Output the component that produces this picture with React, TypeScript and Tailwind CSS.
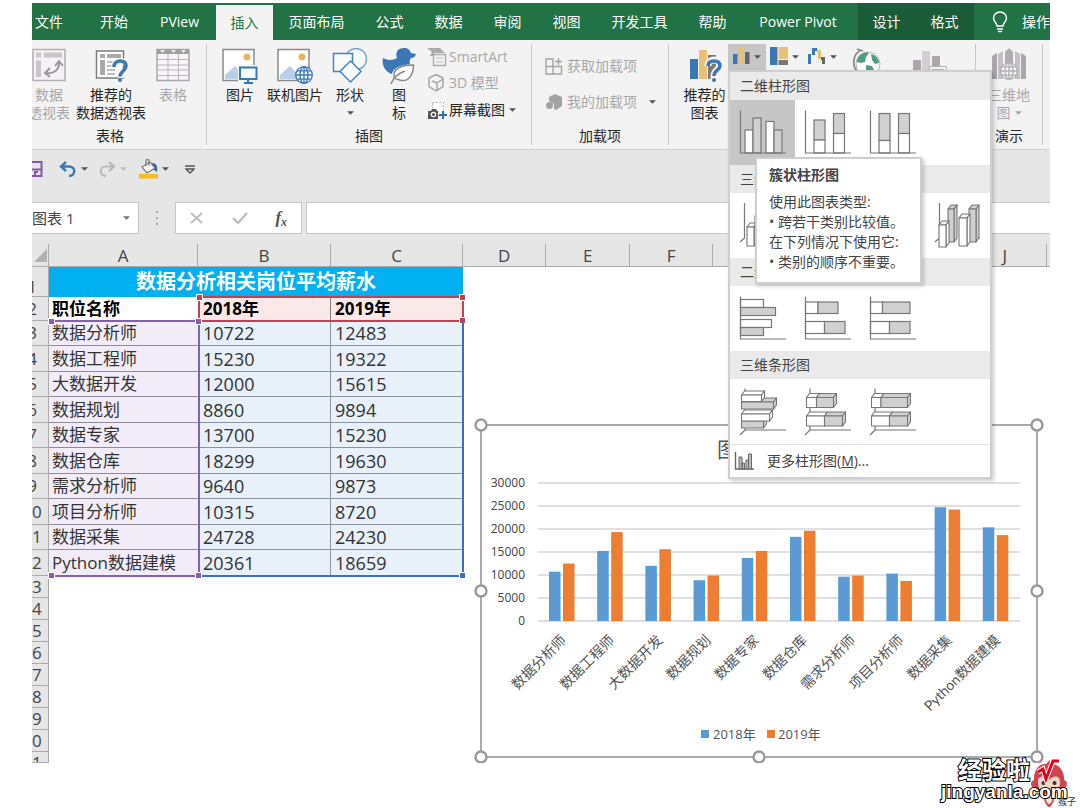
import React from 'react';

interface SalaryRow {
  name: string;
  y2018: number;
  y2019: number;
}

const salaries: SalaryRow[] = [
  { name: '数据分析师', y2018: 10722, y2019: 12483 },
  { name: '数据工程师', y2018: 15230, y2019: 19322 },
  { name: '大数据开发', y2018: 12000, y2019: 15615 },
  { name: '数据规划', y2018: 8860, y2019: 9894 },
  { name: '数据专家', y2018: 13700, y2019: 15230 },
  { name: '数据仓库', y2018: 18299, y2019: 19630 },
  { name: '需求分析师', y2018: 9640, y2019: 9873 },
  { name: '项目分析师', y2018: 10315, y2019: 8720 },
  { name: '数据采集', y2018: 24728, y2019: 24230 },
  { name: 'Python数据建模', y2018: 20361, y2019: 18659 },
];

const tabs = [
  { label: '文件', className: 'w-[53px] pr-[19px]' },
  { label: '开始', className: 'w-[58px]' },
  { label: 'PView', className: 'w-[73px]' },
  { label: '插入', className: 'w-[57px] self-end h-[35px] bg-[#f3f3f3] text-[#217346]' },
  { label: '页面布局', className: 'w-[87px]' },
  { label: '公式', className: 'w-[59px]' },
  { label: '数据', className: 'w-[59px]' },
  { label: '审阅', className: 'w-[59px]' },
  { label: '视图', className: 'w-[59px]' },
  { label: '开发工具', className: 'w-[87px]' },
  { label: '帮助', className: 'w-[59px]' },
  { label: 'Power Pivot', className: 'w-[116px] pr-1' },
  { label: '设计', className: 'w-[57px] bg-[#1b5c38]' },
  { label: '格式', className: 'w-[59px] bg-[#1b5c38]' },
];

/* ---------- icons ---------- */

const Caret = ({ className = 'text-[#555]' }: { className?: string }) => (
  <svg viewBox="0 0 8 4" className={`w-[7px] h-1 shrink-0 ${className}`} fill="currentColor">
    <path d="M0 0h8L4 4z" />
  </svg>
);

const PivotIcon = () => (
  <svg viewBox="0 0 34 34" className="size-[34px]">
    <rect x="1" y="1.500" width="32" height="31" fill="#f6f1f6" stroke="#b3aeb3" strokeWidth="1.500" />
    <path d="M4 4.500h5v5H4zM12 4.500h18v5H12zM4 12.500h5V29H4z" fill="#c9c5c9" />
    <path d="M14 25c8 1 13-3 13-10M23 18l4-5 4 5M18 20l-5 5 5 4" fill="none" stroke="#9b989b" strokeWidth="2" />
  </svg>
);

const SuggestPivotIcon = () => (
  <svg viewBox="0 0 34 34" className="size-[34px]">
    <path d="M2.500 3h27v27h-27z" fill="#fff" stroke="#7d7d7d" strokeWidth="1.500" />
    <path d="M6 6h5v4H6zM13 6h14v4H13zM6 12h5v15H6z" fill="#a8a8a8" />
    <path d="M13 14h12M13 18h8M13 22h8M13 26h8" stroke="#a8a8a8" strokeWidth="1.500" />
    <path d="M20 19c0-4 3-6 7-6s7 2 7 6c0 5-7 5-7 11" fill="none" stroke="#f3f3f3" strokeWidth="6" />
    <path d="M20 19c0-4 3-6 6-6 4 0 6 2 6 5 0 5-6 5-6 10.500" fill="none" stroke="#3a78b5" strokeWidth="3.500" />
    <circle cx="26" cy="32" r="2" fill="#3a78b5" />
  </svg>
);

const TableIcon = () => (
  <svg viewBox="0 0 34 34" className="size-[34px]">
    <path d="M1 1.500h32v31H1z" fill="#f8f4f7" stroke="#aaa6a9" strokeWidth="1.500" />
    <path d="M1 1h32v5H1z" fill="#a19ea0" />
    <path d="M1 11.500h32M1 17h32M1 22h32M1 27.500h32M12 6v27M22.500 6v27" stroke="#b9b5b8" />
    <path d="M4 2h5l-2.500 3zM15 2h5l-2.500 3zM25 2h5l-2.500 3z" fill="#eee" />
  </svg>
);

const PictureBase = () => (
  <>
    <path d="M1 1.500h31v31H1z" fill="#fff" stroke="#8a8a8a" strokeWidth="1.500" />
    <circle cx="25" cy="9" r="3.500" fill="#e3b564" />
    <path d="M3 31V27l10-9 12 13z" fill="#b9cfe6" />
  </>
);

const PictureIcon = () => (
  <svg viewBox="0 0 36 36" className="size-9">
    <PictureBase />
    <path d="M16 17h19v19H16z" fill="#f3f3f3" />
    <path d="M18 19.500h16.500v11.500H18z" fill="#f6f9fc" stroke="#3a78b5" strokeWidth="2" />
    <path d="M26 31v3M22 35h9" stroke="#3a78b5" strokeWidth="2" />
  </svg>
);

const Globe = ({ color }: { color: string }) => (
  <g fill="none" stroke={color} strokeWidth="1.300">
    <circle r="8.300" fill="#f6f9fc" />
    <ellipse rx="4" ry="8.300" />
    <path d="M-8.300 0h16.600M0-8.300v16.600M-7-4.200h14M-7 4.200h14" />
  </g>
);

const OnlinePictureIcon = () => (
  <svg viewBox="0 0 36 36" className="size-9">
    <PictureBase />
    <g transform="translate(27 27)"><Globe color="#3a78b5" /></g>
  </svg>
);

const ShapesIcon = () => (
  <svg viewBox="0 0 36 36" className="size-9">
    <circle cx="24" cy="11" r="10.500" fill="#f8fafc" stroke="#6f9fcf" strokeWidth="1.300" />
    <path d="M1.500 5.500h19v18h-19z" fill="#f8fafc" stroke="#4a84bd" strokeWidth="1.500" />
    <path d="M18.500 13l10.500 10.500L18.500 34 8 23.500z" fill="#f8fafc" stroke="#4a84bd" strokeWidth="1.500" />
  </svg>
);

const DuckIcon = () => (
  <svg viewBox="0 0 36 36" className="size-9">
    <path d="M2 10c3 2 9 3 14 0-2-6 1-10 7-10 4 0 6 2 7 5l5 1c-1 3-3 4-5 4-1 2-2 3-1 6 1 8-6 12-14 11C6 26 0 19 2 10z" fill="#3a78b5" />
    <path d="M12 31c-5-10 8-15 22-15 0 9-5 20-16 17z" fill="#f3f3f3" />
    <path d="M13.500 30c-3-9 7-13 19-13 0 8-4 18-14 15-2-.500-4-1-5-2z" fill="#fff" stroke="#8a8a8a" strokeWidth="1.500" />
    <path d="M10 36c2-6 6-10 14-13" fill="none" stroke="#8a8a8a" strokeWidth="1.500" />
  </svg>
);

const SmartArtIcon = () => (
  <svg viewBox="0 0 20 20" className="size-5 shrink-0">
    <path d="M0 1h13l5 5H7v3H3L5 5z" fill="#ababab" />
    <path d="M6.500 7.500h12v11h-12z" fill="#f3f3f3" stroke="#ababab" strokeWidth="1.400" />
    <path d="M9 11h7M9 15h7" stroke="#bbb" />
  </svg>
);

const CubeIcon = () => (
  <svg viewBox="0 0 20 20" className="size-5 shrink-0" fill="none" stroke="#a3a3a3" strokeWidth="1.400">
    <path d="M9 1.500l7 3.500v8.500L9 18l-7-4.500V5zM5 8l5 2 6-4M10 10v8" />
  </svg>
);

const ScreenshotIcon = () => (
  <svg viewBox="0 0 20 20" className="size-5 shrink-0">
    <path d="M5.500 2.500h11v13h-11z" fill="#fff" stroke="#bbb" strokeDasharray="2 1.500" />
    <path d="M1 11h3l1-2h4l1 2h1v8H1z" fill="#555" />
    <circle cx="6.500" cy="14.500" r="2.200" fill="none" stroke="#fff" strokeWidth="1.200" />
    <path d="M12 15h8M16 11v8" stroke="#2f6fb0" strokeWidth="2" />
  </svg>
);

const StoreIcon = () => (
  <svg viewBox="0 0 18 18" className="size-[18px] shrink-0" fill="none" stroke="#a3a3a3" strokeWidth="1.400">
    <path d="M1 2h7v15H1zM1 9.500h15.500V17H8V9.500M13.500 1v7M10 4.500h7" />
  </svg>
);

const AddinIcon = () => (
  <svg viewBox="0 0 18 18" className="size-[18px] shrink-0" fill="#a3a3a3">
    <path d="M4 4l6-3 7 3v9l-6 4-2-1v-5L4 8z" />
    <circle cx="4.500" cy="12.500" r="3.500" />
  </svg>
);

const SuggestChartIcon = () => (
  <svg viewBox="0 0 34 36" className="w-[34px] h-9">
    <path d="M2 11h8v20H2z" fill="#3a78b5" />
    <path d="M11 2h8v29h-8z" fill="#e9c078" />
    <path d="M20 7h8v24h-8z" fill="#777" />
    <path d="M20 18c0-4 3-6 6-6 4 0 6 2 6 5 0 5-6 5-6 11v4" fill="none" stroke="#f3f3f3" strokeWidth="7" />
    <path d="M20 18c0-4 3-5 6-5 4 0 6 2 6 5 0 4-6 4-6 10" fill="none" stroke="#3a78b5" strokeWidth="3.500" />
    <circle cx="26" cy="32" r="2" fill="#3a78b5" />
  </svg>
);

const ColumnChartIcon = () => (
  <svg viewBox="0 0 18 18" className="size-[18px]">
    <path d="M1 7h4.500v10H1z" fill="#3a78b5" />
    <path d="M6.500 1H12v16H6.500z" fill="#e9c078" />
    <path d="M13 5h4.500v12H13z" fill="#666" />
  </svg>
);

const TreemapIcon = () => (
  <svg viewBox="0 0 18 18" className="size-[18px]">
    <path d="M0 0h7.500v18H0z" fill="#3a78b5" />
    <path d="M8.500 0H18v12H8.500z" fill="#e9c078" />
    <path d="M8.500 13H18v5H8.500z" fill="#777" />
  </svg>
);

const WaterfallIcon = () => (
  <svg viewBox="0 0 18 18" className="size-[18px]">
    <path d="M0 7h3v10H0zM4 1h5v3H7v4H4z" fill="#3a78b5" />
    <path d="M9 3h4v9h-3V6H9z" fill="#e9c078" />
    <path d="M13 10h4v7h-3v-4h-1z" fill="#666" />
  </svg>
);

const MapIcon = () => (
  <svg viewBox="0 0 30 32" className="w-[30px] h-8">
    <circle cx="16" cy="16" r="12" fill="#fff" stroke="#a9b7b0" />
    <path d="M8 7c4-3 7-3 9-2l-3 4-1 5-4 1-4-1c0-3 1-5 3-7zM19 6c5 1 8 5 8 9l-4 1-3-4zM14 17l6 1 2 4-5 5-3-3z" fill="#4f9d81" />
    <path d="M9 2C1 6-1 17 6 25M5 1l6 2" fill="none" stroke="#8a8a8a" strokeWidth="1.800" />
  </svg>
);

const PivotChartIcon = () => (
  <svg viewBox="0 0 36 32" className="w-9 h-8">
    <path d="M1 12h8v16H1zM20 8h8v12h-8z" fill="#aaa6aa" />
    <path d="M10 3h8v25h-8z" fill="#d6cdd4" />
    <path d="M17.500 18.500h17v12h-17z" fill="#f3f3f3" stroke="#b5b5b5" />
    <path d="M20 21.500h12" stroke="#b5b5b5" />
  </svg>
);

const Map3DIcon = () => (
  <svg viewBox="0 0 34 34" className="size-[34px]">
    <path d="M0 8l5-3v26H0zM29 5l5 3v23h-5z" fill="#aaa6aa" />
    <path d="M6 6l5-3v28H6zM23 3l5 3v25h-5z" fill="#c4c0c4" />
    <path d="M13 4l4-4 4 4v14h-8z" fill="#b0acb0" />
    <g transform="translate(17 23)"><Globe color="#b0b0b0" /></g>
  </svg>
);

const Bulb = () => (
  <svg viewBox="0 0 16 22" className="w-4 h-[22px]" fill="none" stroke="#fff" strokeWidth="1.500">
    <path d="M5 15c0-3-3.500-4-3.500-8a6.500 6 0 0 1 13 0c0 4-3.500 5-3.500 8zM5 18h6M6 20.500h4" />
  </svg>
);

/* ---------- gallery drawings ---------- */

const GREY = '#d0d0d0';

const Axes = () => <path d="M1.500 1.500v42.500H47" fill="none" stroke="#777" strokeWidth="1.200" />;

// each bar is [x, y, width, height, filled]
type Bar = [number, number, number, number, boolean];

const FlatIcon = ({ bars }: { bars: Bar[] }) => (
  <svg viewBox="0 0 48 48" className="size-12">
    {bars.map(([x, y, w, h, filled], i) => (
      <rect key={i} x={x} y={y} width={w} height={h} fill={filled ? GREY : '#fff'} stroke="#777" strokeWidth="1.200" />
    ))}
    <Axes />
  </svg>
);

const Box = ({ bar: [x, y, w, h, filled] }: { bar: Bar }) => (
  <g fill={filled ? GREY : '#fff'} stroke="#777" strokeWidth="1.100" strokeLinejoin="round">
    <path d={`M${x} ${y}l3-4h${w}l-3 4z`} />
    <path d={`M${x + w} ${y}l3-4v${h}l-3 4z`} />
    <rect x={x} y={y} width={w} height={h} />
  </g>
);

const SolidIcon = ({ bars }: { bars: Bar[] }) => (
  <svg viewBox="0 0 48 48" className="size-12">
    <path d="M6 .500V42h41M6 42l-5 5" fill="none" stroke="#777" strokeWidth="1.200" />
    {bars.map((bar, i) => <Box key={i} bar={bar} />)}
  </svg>
);

const SolidColumnIcon = ({ bars }: { bars: Bar[] }) => (
  <svg viewBox="0 0 48 48" className="size-12">
    <path d="M5.500 1v35L1 40M40 36h6" fill="none" stroke="#777" strokeWidth="1.200" />
    {bars.map((bar, i) => <Box key={i} bar={bar} />)}
  </svg>
);

const column3d: Bar[] = [
  [8, 25, 7, 19, false],
  [16, 14, 6, 30, true],
  [28, 17, 7, 27, false],
  [36, 24, 6, 20, true],
];

const galleries = [
  {
    title: '二维柱形图',
    items: [
      { label: '簇状柱形图', icon: <FlatIcon bars={[[6, 21, 8, 23, false], [14, 9, 8, 35, true], [27, 12.5, 8, 31.5, false], [35, 21, 8, 23, true]]} /> },
      { label: '堆积柱形图', icon: <FlatIcon bars={[[10, 11, 11, 20, true], [10, 31, 11, 13, false], [29.5, 4.5, 11, 20, true], [29.5, 24.5, 11, 19.5, false]]} /> },
      { label: '百分比堆积柱形图', icon: <FlatIcon bars={[[10, 4.5, 11, 27, true], [10, 31.5, 11, 12.5, false], [29.5, 4.5, 11, 20, true], [29.5, 24.5, 11, 19.5, false]]} /> },
    ],
  },
  {
    title: '三维柱形图',
    items: [
      { label: '三维簇状柱形图', icon: <SolidColumnIcon bars={column3d} /> },
      { label: '三维堆积柱形图', icon: <SolidColumnIcon bars={column3d} /> },
      { label: '三维百分比堆积柱形图', icon: <SolidColumnIcon bars={column3d} /> },
      { label: '三维柱形图', icon: <SolidColumnIcon bars={[[14, 7, 6, 33, true], [5, 23, 7, 22, false], [35, 7, 7, 33, true], [25, 16, 8, 28, false]]} /> },
    ],
  },
  {
    title: '二维条形图',
    items: [
      { label: '簇状条形图', icon: <FlatIcon bars={[[1.5, 4.5, 23, 8, false], [1.5, 12.5, 35, 8, true], [1.5, 24.5, 31, 8, false], [1.5, 32.5, 23, 8, true]]} /> },
      { label: '堆积条形图', icon: <FlatIcon bars={[[1.5, 7, 12.5, 11.5, false], [14, 7, 20, 11.5, true], [1.5, 26.5, 19, 12, false], [20.5, 26.5, 20.5, 12, true]]} /> },
      { label: '百分比堆积条形图', icon: <FlatIcon bars={[[1.5, 7, 12, 11.5, false], [13.5, 7, 27.5, 11.5, true], [1.5, 26.5, 19, 12, false], [20.5, 26.5, 20.5, 12, true]]} /> },
    ],
  },
  {
    title: '三维条形图',
    items: [
      { label: '三维簇状条形图', icon: <SolidIcon bars={[[2.5, 33, 22, 7, true], [2.5, 26, 28, 7, false], [2.5, 14, 32, 7, true], [2.5, 7, 20, 6.5, false]]} /> },
      { label: '三维堆积条形图', icon: <SolidIcon bars={[[2.5, 9.5, 10, 10, false], [12.5, 9.5, 17, 10, true], [2.5, 28, 18, 10, false], [20.5, 28, 18, 10, true]]} /> },
      { label: '三维百分比堆积条形图', icon: <SolidIcon bars={[[2.5, 9.5, 9.5, 10, false], [12, 9.5, 26.5, 10, true], [2.5, 28, 18, 10, false], [20.5, 28, 18, 10, true]]} /> },
    ],
  },
];

const ChartMenu = () => (
  <div className="absolute top-[26px] left-0 z-20 w-[264px] border-2 border-[#cfcfcf] bg-white shadow-[2px_2px_4px_rgba(0,0,0,0.2)] text-[#444]">
    {galleries.map((gallery, g) => (
      <section key={gallery.title}>
        <h3 className="h-7 bg-[#eaeaea] px-[10px] text-sm leading-7">{gallery.title}</h3>
        <div className="flex h-[65px]">
          {gallery.items.map((item, i) => (
            <button
              key={item.label}
              type="button"
              aria-label={item.label}
              className={`flex w-[65px] items-center justify-center ${g === 0 && i === 0 ? 'bg-[#c6c6c6]' : ''}`}
            >
              {item.icon}
            </button>
          ))}
        </div>
      </section>
    ))}
    <button type="button" className="flex h-[33px] w-full items-center border-t border-[#e1e1e1] pl-1 gap-[13px] text-sm">
      <svg viewBox="0 0 20 20" className="size-5">
        <path d="M1.500 1v17H20" fill="none" stroke="#666" strokeWidth="1.400" />
        <path d="M5 6h3v12H5zM8 12h2.500v6H8zM12 9h2.500v9H12zM14.500 3h3v15h-3z" fill="#bbb" stroke="#666" />
      </svg>
      <span>更多柱形图(<u>M</u>)...</span>
    </button>
    <div role="tooltip" className="absolute top-[85px] left-[25px] w-[167px] border-2 border-[#cfcfcf] bg-white pt-[6px] pb-[10px] pl-3 text-sm leading-5 shadow-[2px_2px_4px_rgba(0,0,0,0.2)] whitespace-nowrap">
      <p className="mb-[7px] font-bold">簇状柱形图</p>
      <p>使用此图表类型:</p>
      <p>• 跨若干类别比较值。</p>
      <p>在下列情况下使用它:</p>
      <p>• 类别的顺序不重要。</p>
    </div>
  </div>
);

/* ---------- ribbon ---------- */

interface BigButtonProps {
  icon: React.ReactNode;
  lines: string[];
  className: string;
  caret?: boolean;
}

const BigButton = ({ icon, lines, className, caret = false }: BigButtonProps) => (
  <button type="button" className={`flex shrink-0 flex-col items-center pt-1 text-sm leading-[18px] whitespace-nowrap ${className}`}>
    <span className="mb-1 flex h-[34px] items-start">{icon}</span>
    {lines.map(line => <span key={line}>{line}</span>)}
    {caret && <span className="flex h-[18px] items-center"><Caret /></span>}
  </button>
);

const Group = ({ label, className, children }: { label: string; className: string; children: React.ReactNode }) => (
  <div className={`flex flex-col border-r border-[#c8c8c8] ${className}`}>
    <div className="flex h-20 shrink-0">{children}</div>
    <div className="text-center text-sm leading-6">{label}</div>
  </div>
);

const Ribbon = () => (
  <div className="flex h-[110px] border-b border-[#d2d2d2] bg-[#f3f3f3] py-1 text-[#262626]">
    <Group label="表格" className="w-[175px] pr-[18px]">
      <BigButton icon={<PivotIcon />} lines={['数据', '透视表']} className="w-[34px] text-[#a8a8a8]" />
      <BigButton icon={<SuggestPivotIcon />} lines={['推荐的', '数据透视表']} className="w-[90px]" />
      <BigButton icon={<TableIcon />} lines={['表格']} className="w-[34px] text-[#a8a8a8]" />
    </Group>
    <Group label="插图" className="w-[325px]">
      <BigButton icon={<PictureIcon />} lines={['图片']} className="ml-[6px] w-[54px]" />
      <BigButton icon={<OnlinePictureIcon />} lines={['联机图片']} className="w-14" />
      <BigButton icon={<ShapesIcon />} lines={['形状']} caret className="w-[54px]" />
      <BigButton icon={<DuckIcon />} lines={['图', '标']} className="w-[44px]" />
      <div className="ml-[6px] flex flex-col text-sm text-[#a8a8a8]">
        <button type="button" className="flex h-[26px] items-center gap-[2px]"><SmartArtIcon />SmartArt</button>
        <button type="button" className="flex h-[26px] items-center gap-[2px]"><CubeIcon />3D 模型</button>
        <button type="button" className="flex h-7 items-center gap-[2px] text-[#262626]">
          <ScreenshotIcon />屏幕截图<span className="ml-[2px]"><Caret className="block text-[#555]" /></span>
        </button>
      </div>
    </Group>
    <Group label="加载项" className="w-[137px]">
      <div className="flex flex-col gap-3 pt-[10px] pl-[13px] text-sm text-[#a8a8a8]">
        <button type="button" className="flex h-6 items-center gap-1"><StoreIcon />获取加载项</button>
        <button type="button" className="flex h-6 items-center gap-1">
          <AddinIcon />我的加载项<span className="ml-2"><Caret className="block text-[#555]" /></span>
        </button>
      </div>
    </Group>
    <div className="flex flex-1 items-start border-r border-[#c8c8c8] pl-3">
      <BigButton icon={<SuggestChartIcon />} lines={['推荐的', '图表']} className="w-[47px]" />
      <div className="relative">
        <button type="button" aria-label="插入柱形图或条形图" className="flex h-7 w-[38px] gap-1 bg-[#c6c6c6] pt-[3px] pl-1">
          <ColumnChartIcon /><span className="mt-2"><Caret className="block text-[#555]" /></span>
        </button>
        <ChartMenu />
      </div>
      <button type="button" aria-label="插入层次结构图表" className="flex h-7 w-[38px] gap-1 pt-[3px] pl-1">
        <TreemapIcon /><span className="mt-2"><Caret className="block text-[#555]" /></span>
      </button>
      <button type="button" aria-label="插入瀑布图" className="flex h-7 w-[38px] gap-1 pt-[3px] pl-1">
        <WaterfallIcon /><span className="mt-2"><Caret className="block text-[#555]" /></span>
      </button>
      <button type="button" aria-label="地图" className="ml-[10px] pt-1"><MapIcon /></button>
      <button type="button" aria-label="数据透视图" className="ml-[30px] pt-1"><PivotChartIcon /></button>
    </div>
    <Group label="演示" className="mr-[7px] w-[67px]">
      <button type="button" className="flex w-full flex-col items-center pt-1 text-sm leading-[18px] text-[#a8a8a8]">
        <span className="mb-1 h-[34px]"><Map3DIcon /></span>
        <span>三维地</span>
        <span className="flex items-center gap-1">图<Caret className="text-[#a8a8a8]" /></span>
      </button>
    </Group>
  </div>
);

const QuickAccess = () => (
  <div className="flex h-[38px] items-center">
    <button type="button" aria-label="保存" className="w-[11px]">
      <svg viewBox="0 0 11 18" className="w-[11px] h-[18px]" fill="none" stroke="#8458a8" strokeWidth="2">
        <path d="M0 2h9.500v14H0M0 9.500h9M0 16h3v-4h3" />
      </svg>
    </button>
    <button type="button" aria-label="撤消" className="ml-4 flex items-center gap-1">
      <svg viewBox="0 0 18 16" className="w-[18px] h-4" fill="none" stroke="#3a78b5" strokeWidth="2.400">
        <path d="M7 1L2 5.500 7 10M2 5.500h8c7 0 7 9 0 9.500" />
      </svg>
      <Caret />
    </button>
    <button type="button" aria-label="恢复" className="ml-[10px] flex items-center gap-1">
      <svg viewBox="0 0 18 16" className="w-[18px] h-4" fill="none" stroke="#b9b9b9" strokeWidth="2.200">
        <path d="M11 1l5 4.500L11 10M16 5.500H8c-7 0-7 9 0 9.500" />
      </svg>
      <Caret className="text-[#bdbdbd]" />
    </button>
    <button type="button" aria-label="填充颜色" className="ml-3 flex items-center gap-[3px]">
      <svg viewBox="0 0 20 20" className="size-5">
        <path d="M0 15h19v4.500H0z" fill="#f2bd1d" />
        <path d="M13 4c4 0 6 3 5 9-2-1-4-3-6-6z" fill="#3a66a5" />
        <path d="M3 8l8-5 5 6-8 5z" fill="#fff" stroke="#777" strokeWidth="1.200" />
        <path d="M7 7V2c0-2 3-2 3 0v5" fill="none" stroke="#777" strokeWidth="1.200" />
      </svg>
      <Caret />
    </button>
    <button type="button" aria-label="自定义快速访问工具栏" className="ml-4">
      <svg viewBox="0 0 10 9" className="w-[10px] h-[9px]" fill="none" stroke="#555" strokeWidth="1.400">
        <path d="M0 1h10M1 4l4 4 4-4z" />
      </svg>
    </button>
  </div>
);

const FormulaBar = () => (
  <div className="mt-[14px] flex h-8 items-center">
    <div className="flex h-8 w-[107px] items-center border-y border-r border-[#c6c6c6] bg-white pr-2">
      <input aria-label="名称框" defaultValue="图表 1" className="min-w-0 flex-1 bg-transparent text-[15px] text-[#444] outline-none" />
      <button type="button" aria-label="名称列表"><Caret className="text-[#777]" /></button>
    </div>
    <svg viewBox="0 0 2 14" className="mx-[17px] w-[2px] h-[14px]" fill="#a8a8a8">
      <path d="M0 0h2v2H0zM0 6h2v2H0zM0 12h2v2H0z" />
    </svg>
    <div className="flex h-8 w-[127px] items-center justify-around border border-[#c6c6c6] bg-white">
      <button type="button" aria-label="取消">
        <svg viewBox="0 0 14 14" className="size-[14px]" stroke="#bdbdbd" strokeWidth="2"><path d="M1 2l11 10M12 2L1 12" /></svg>
      </button>
      <button type="button" aria-label="输入">
        <svg viewBox="0 0 16 14" className="w-4 h-[14px]" fill="none" stroke="#bdbdbd" strokeWidth="2.400"><path d="M1 7l5 5 9-10" /></svg>
      </button>
      <button type="button" aria-label="插入函数" className="font-['Liberation_Serif',serif] text-[17px] font-bold leading-none text-[#555] italic">
        f<sub className="text-xs">x</sub>
      </button>
    </div>
    <input aria-label="编辑栏" className="ml-1 h-8 min-w-0 flex-1 border-y border-l border-[#c6c6c6] bg-white px-2 outline-none" />
  </div>
);

/* ---------- sheet ---------- */

// the header column is half scrolled out of the window
const RowHeader = ({ n, className = '' }: { n: number; className?: string }) => (
  <th scope="row" className="border-r border-b border-[#ababab] bg-[#e6e6e6] p-0 align-bottom font-normal">
    <div className={`-ml-[18px] w-9 text-center text-[17px] text-[#444] ${className}`}>{n}</div>
  </th>
);

const Handle = ({ className }: { className: string }) => <i className={`absolute size-[7px] border border-white ${className}`} />;

const Sheet = () => (
  <div className="relative">
    <table className="w-full table-fixed border-separate border-spacing-0 text-left text-[17px]">
      <colgroup>
        <col className="w-[17px]" />
        <col className="w-[149px]" />
        <col className="w-[133px]" />
        <col className="w-[132px]" />
        {[0, 1, 2, 3, 4, 5, 6].map(i => <col key={i} />)}
        <col className="w-[3px]" />
      </colgroup>
      <thead>
        <tr className="h-[23px] bg-[#e6e6e6] leading-5 text-[#444]">
          <th className="border-r border-b border-[#ababab] p-0">
            <svg viewBox="0 0 13 13" className="ml-[2px] size-[13px]"><path d="M13 0v13H0z" fill="#b1b1b1" /></svg>
          </th>
          {['A', 'B', 'C', 'D', 'E', 'F', 'G', 'H', 'I', 'J'].map(col => (
            <th key={col} scope="col" className="border-r border-b border-[#ababab] p-0 pt-[2px] text-center font-normal">{col}</th>
          ))}
          <th className="border-b border-[#ababab] p-0" />
        </tr>
      </thead>
      <tbody>
        <tr className="h-[30px]">
          <RowHeader n={1} className="leading-[18px]" />
          <td colSpan={3} className="bg-[#00b0f0] p-0 text-center text-[20px] leading-[28px] font-bold text-white">数据分析相关岗位平均薪水</td>
        </tr>
        <tr className="h-6 leading-[22px] font-bold text-black">
          <RowHeader n={2} className="leading-[22px]" />
          <td className="p-0 pl-[3px]">职位名称</td>
          <td className="border-r border-[#7f7f7f] bg-[#fae9e8] p-0 pl-[5px]">2018年</td>
          <td className="bg-[#fae9e8] p-0 pl-[4px]">2019年</td>
        </tr>
        {salaries.map((row, i) => (
          <tr key={row.name} className="leading-6 text-[#333] odd:h-[25px] even:h-[26px]">
            <RowHeader n={i + 3} />
            <td className="border-b border-[#8f8b98] bg-[#f1ecf8] p-0 pl-[3px] whitespace-nowrap">{row.name}</td>
            <td className="border-r border-b border-[#8b939c] bg-[#e8f0fa] p-0 pl-[5px] text-lg leading-6">{row.y2018}</td>
            <td className="border-b border-[#8b939c] bg-[#e8f0fa] p-0 pl-[4px] text-lg leading-6">{row.y2019}</td>
          </tr>
        ))}
        {[13, 14, 15, 16, 17, 18, 19, 20].map(n => (
          <tr key={n} className="h-[22px]"><RowHeader n={n} className="leading-[21px]" /></tr>
        ))}
        <tr><RowHeader n={21} className="h-[10px] overflow-hidden leading-[21px]" /></tr>
      </tbody>
    </table>

    {/* ranges that feed the chart */}
    <div className="pointer-events-none absolute top-[52px] left-[166px] h-[26px] w-[266px] border-2 border-[#be4250]">
      <Handle className="-top-1 -left-1 bg-[#be4250]" />
      <Handle className="-top-1 -right-1 bg-[#be4250]" />
      <Handle className="-right-1 -bottom-1 bg-[#be4250]" />
    </div>
    <div className="pointer-events-none absolute top-[77px] left-[166px] h-[256px] w-[266px] border-r-2 border-b-2 border-[#3f6fb8]">
      <Handle className="-right-1 -bottom-1 bg-[#3f6fb8]" />
    </div>
    <div className="pointer-events-none absolute top-[76px] left-[17px] h-[257px] w-[151px] border-2 border-l-0 border-[#8660ad]">
      <Handle className="-top-1 -left-px bg-[#8660ad]" />
      <Handle className="-top-1 -right-1 bg-[#8660ad]" />
      <Handle className="-bottom-1 -left-px bg-[#8660ad]" />
      <Handle className="-right-1 -bottom-1 bg-[#8660ad]" />
    </div>

    <SalaryChart />
  </div>
);

const SalaryChart = () => {
  const baseline = 196;
  const scale = 138 / 30000;
  const ticks = [0, 5000, 10000, 15000, 20000, 25000, 30000];
  const handles = [[0, 0], [278, 0], [556, 0], [0, 166], [556, 166], [0, 332], [278, 332], [556, 332]];

  return (
    <svg viewBox="0 0 556 332" className="absolute top-[181px] left-[449px] h-[332px] w-[556px] overflow-visible" role="img" aria-label="图表标题">
      <rect width="556" height="332" fill="#fff" stroke="#a3a3a3" strokeWidth="1.800" />
      <text x="278" y="32" textAnchor="middle" fontSize="21" fill="#555">图表标题</text>
      {ticks.map(tick => {
        const y = baseline - tick * scale;
        return (
          <g key={tick}>
            <path d={`M57 ${y}H539`} stroke="#d6d6d6" strokeWidth="1.300" />
            <text x="44" y={y + 4} textAnchor="end" fontSize="12" fill="#444">{tick}</text>
          </g>
        );
      })}
      {salaries.map((row, i) => {
        const center = 81 + i * 48.2;
        return (
          <g key={row.name}>
            <rect x={center - 13} y={baseline - row.y2018 * scale} width="11.500" height={row.y2018 * scale} fill="#5b9bd5" />
            <rect x={center + 1} y={baseline - row.y2019 * scale} width="11.500" height={row.y2019 * scale} fill="#ed7d31" />
            <text
              transform={`translate(${center + 5} 216) rotate(-45)`}
              textAnchor="end"
              fontFamily="Lato, 'Noto Sans CJK SC', sans-serif"
              fontSize="14"
              fill="#555"
            >
              {row.name}
            </text>
          </g>
        );
      })}
      <rect x="220" y="305" width="8" height="8" fill="#5b9bd5" />
      <text x="232" y="314" fontSize="13" fill="#555">2018年</text>
      <rect x="286" y="305" width="8" height="8" fill="#ed7d31" />
      <text x="297" y="314" fontSize="13" fill="#555">2019年</text>
      {handles.map(([x, y]) => (
        <circle key={`${x}-${y}`} cx={x} cy={y} r="5.500" fill="#fff" stroke="#999" strokeWidth="2.400" />
      ))}
    </svg>
  );
};

const Watermark = () => (
  <div className="absolute right-1 bottom-0 h-[50px] w-[136px] leading-none">
    <svg viewBox="0 0 36 48" className="absolute right-[9px] bottom-0 h-12 w-9">
      <circle cx="4" cy="24" r="4" fill="#c9505a" />
      <circle cx="32" cy="24" r="4" fill="#c9505a" />
      <path d="M3 22C2 9 9 3 15 4l4-4 1 4c9 0 14 8 13 18-1 8-7 13-15 13S4 30 3 22z" fill="#cf4450" />
      <path d="M7 22c0-7 7-7 11-2 4-5 11-5 11 2 0 5-2 8-4 11 0 6-3 13-7 13s-7-7-7-13c-2-3-4-6-4-11z" fill="#f2d5c5" />
      <path d="M11 31c2 8 4 16 7 16s6-8 7-16z" fill="#c9505a" />
      <path d="M14 34c1 6 2 10 4 10s4-4 4-10z" fill="#f6e2d8" />
      <circle cx="12.500" cy="23" r="2" fill="#333" />
      <circle cx="23.500" cy="23" r="2" fill="#333" />
    </svg>
    <span className="absolute right-0 bottom-[2px] text-[9px] text-[#333]">猴子</span>
    <p className="absolute top-0 left-[18px] text-[24px] font-bold text-white [-webkit-text-stroke:2px_black] [paint-order:stroke_fill]">经验啦</p>
    <svg viewBox="0 0 24 26" className="absolute top-0 left-[96px] h-[26px] w-6" fill="none">
      <path d="M2 14l5-3 3 10L17 3h6" stroke="#fff" strokeWidth="5" />
      <path d="M2 14l5-3 3 10L17 3h6" stroke="#e60012" strokeWidth="3" />
    </svg>
    <p className="absolute top-[24px] left-px font-['Liberation_Sans',sans-serif] text-[19px] font-bold text-white [-webkit-text-stroke:2px_black] [paint-order:stroke_fill]">jingyanla.com</p>
  </div>
);

export default function App() {
  return (
    <main className="relative min-h-screen bg-white pt-[3px] pr-[30px] pl-8 font-['Open_Sans','Noto_Sans_CJK_SC',sans-serif]">
      <div className="overflow-hidden">
        <nav className="flex h-[37px] bg-[#217346] text-sm text-white">
          {tabs.map(tab => (
            <button key={tab.label} type="button" className={`shrink-0 whitespace-nowrap ${tab.className}`}>{tab.label}</button>
          ))}
          <button type="button" className="ml-[18px] flex shrink-0 items-center gap-[14px]"><Bulb />操作</button>
        </nav>
        <Ribbon />
        <div className="bg-[#e6e6e6] pb-[10px]">
          <QuickAccess />
          <FormulaBar />
        </div>
        <Sheet />
      </div>
      <Watermark />
    </main>
  );
}
